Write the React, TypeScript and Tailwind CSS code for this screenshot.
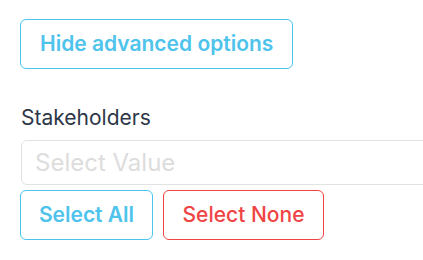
import React from 'react'

export default function App() {
  return (
    <div
      className="w-[423px] h-[260px] bg-white overflow-hidden pl-5 pt-[19px]"
      style={{ fontFamily: 'Inter, "Noto Sans", sans-serif' }}
    >
      <button
        type="button"
        className="h-[50px] px-[19px] rounded-md border border-[#4ac3ee] bg-white text-[21px] font-semibold text-[#4ec3ec]"
      >
        Hide advanced options
      </button>

      <div className="mt-[37px]">
        <label className="block text-[21px] leading-[24px] text-[#2d3748] pl-[1px]">
          Stakeholders
        </label>
        <div className="mt-[10px] ml-[1px] w-[420px] h-[45px] rounded-md border border-[#e2e2e2] flex items-center px-[13px]">
          <span className="text-[24px] text-[#dddddd]">Select Value</span>
        </div>
        <div className="mt-[5px] flex gap-[10px]">
          <button
            type="button"
            className="h-[50px] w-[133px] rounded-md border border-[#4ac3ee] bg-white text-[21px] font-semibold text-[#4ec3ec]"
          >
            Select All
          </button>
          <button
            type="button"
            className="h-[50px] w-[161px] rounded-md border border-[#ef4444] bg-white text-[21px] font-medium text-[#ef4444]"
          >
            Select None
          </button>
        </div>
      </div>
    </div>
  )
}
